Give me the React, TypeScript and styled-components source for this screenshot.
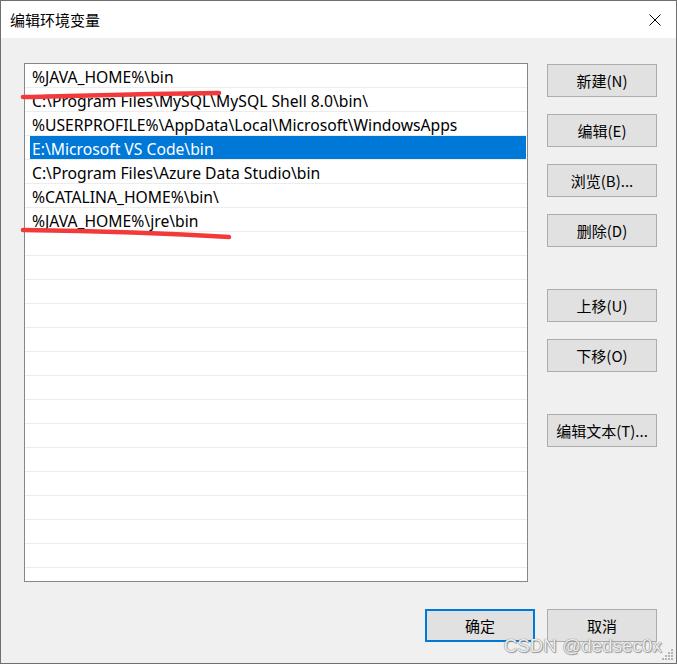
import React from "react";
import styled, { createGlobalStyle } from "styled-components";

const Global = createGlobalStyle`
  html, body { margin: 0; padding: 0; background: #ffffff; }
  * { box-sizing: border-box; }
`;

const FONT = `"Noto Sans", "Noto Sans CJK SC", sans-serif`;

const Window = styled.div`
  position: relative;
  width: 677px;
  height: 664px;
  border: 1px solid #6f6f6f;
  background: #f0f0f0;
  display: flex;
  flex-direction: column;
  font-family: ${FONT};
  overflow: hidden;
`;

const TitleBar = styled.div`
  height: 37px;
  background: #ffffff;
  display: flex;
  align-items: center;
  justify-content: space-between;
  padding: 0 15px 0 9px;
  flex-shrink: 0;
`;

const Title = styled.div`
  font-family: "Noto Sans CJK SC", sans-serif;
  font-size: 15px;
  color: #000;
`;

const CloseBtn = styled.div`
  width: 12px;
  height: 12px;
  display: flex;
`;

const Body = styled.div`
  display: grid;
  grid-template-columns: 504px 110px;
  column-gap: 19px;
  padding: 25px 0 0 23px;
`;

const ListBox = styled.div`
  position: relative;
  width: 504px;
  height: 519px;
  border: 1px solid #828790;
  background: #ffffff;
  overflow: hidden;
`;

const Row = styled.div<{ $selected?: boolean }>`
  height: 24px;
  border-bottom: 1px solid #ececec;
  padding: 0 1px 0 5px;
  background: ${(p) => (p.$selected ? "#0078d7" : "transparent")};
  background-clip: content-box;
  display: flex;
  align-items: center;
  color: ${(p) => (p.$selected ? "#ffffff" : "#000000")};
  font-size: 15.7px;
  white-space: nowrap;
`;

const RowText = styled.span`
  padding-left: 2px;
  padding-top: 2px;
`;

const ButtonColumn = styled.div`
  display: flex;
  flex-direction: column;
  padding-top: 1px;
`;

const Button = styled.div<{ $gap?: number; $default?: boolean }>`
  width: 110px;
  height: 33px;
  margin-top: ${(p) => p.$gap ?? 0}px;
  background: #e1e1e1;
  border: ${(p) => (p.$default ? "2px solid #0078d7" : "1px solid #adadad")};
  display: flex;
  align-items: center;
  justify-content: center;
  font-family: "Noto Sans CJK SC", "Noto Sans", sans-serif;
  font-size: 15px;
  color: #000;
`;

const Footer = styled.div`
  display: flex;
  justify-content: flex-end;
  gap: 12px;
  padding: 27px 19px 0 0;
`;

const Annotations = styled.svg`
  position: absolute;
  left: 0;
  top: 0;
  pointer-events: none;
`;

const Watermark = styled.div`
  position: absolute;
  right: 14px;
  bottom: 6px;
  font-family: "Liberation Sans", "Noto Sans", sans-serif;
  font-size: 18.5px;
  color: rgba(255, 255, 255, 0.85);
  text-shadow: 0 0 1px #8a8a8a, 0 0 1px #8a8a8a, 1px 1px 1px #9a9a9a;
  letter-spacing: 0.2px;
`;

const Grip = styled.svg`
  position: absolute;
  right: 2px;
  bottom: 2px;
`;

const items = [
  "%JAVA_HOME%\\bin",
  "C:\\Program Files\\MySQL\\MySQL Shell 8.0\\bin\\",
  "%USERPROFILE%\\AppData\\Local\\Microsoft\\WindowsApps",
  "E:\\Microsoft VS Code\\bin",
  "C:\\Program Files\\Azure Data Studio\\bin",
  "%CATALINA_HOME%\\bin\\",
  "%JAVA_HOME%\\jre\\bin",
];

const sideButtons: { label: string; gap: number }[] = [
  { label: "新建(N)", gap: 0 },
  { label: "编辑(E)", gap: 17 },
  { label: "浏览(B)...", gap: 17 },
  { label: "删除(D)", gap: 17 },
  { label: "上移(U)", gap: 42 },
  { label: "下移(O)", gap: 17 },
  { label: "编辑文本(T)...", gap: 42 },
];

export default function App() {
  const rows = Array.from({ length: 22 }, (_, i) => items[i] ?? "");
  return (
    <>
      <Global />
      <Window>
        <TitleBar>
          <Title>编辑环境变量</Title>
          <CloseBtn>
            <svg width="12" height="12" viewBox="0 0 12 12">
              <path d="M0.5 0.5 L11.5 11.5 M11.5 0.5 L0.5 11.5" stroke="#000" strokeWidth="1" />
            </svg>
          </CloseBtn>
        </TitleBar>
        <Body>
          <ListBox>
            {rows.map((t, i) => (
              <Row key={i} $selected={i === 3}>
                <RowText>{t}</RowText>
              </Row>
            ))}
          </ListBox>
          <ButtonColumn>
            {sideButtons.map((b) => (
              <Button key={b.label} $gap={b.gap}>
                {b.label}
              </Button>
            ))}
          </ButtonColumn>
        </Body>
        <Footer>
          <Button $default>确定</Button>
          <Button>取消</Button>
        </Footer>
        <Annotations width="677" height="664" viewBox="0 0 677 664">
          <path
            d="M22 96 C 70 95, 130 93, 218 92"
            stroke="#f23a3a"
            strokeWidth="4.5"
            strokeLinecap="round"
            fill="none"
          />
          <path
            d="M22 229 C 90 230, 160 232, 228 236"
            stroke="#f23a3a"
            strokeWidth="4.5"
            strokeLinecap="round"
            fill="none"
          />
        </Annotations>
        <Watermark>CSDN @dedsec0x</Watermark>
        <Grip width="12" height="12" viewBox="0 0 12 12">
          {[
            [9, 0],
            [6, 3],
            [9, 3],
            [3, 6],
            [6, 6],
            [9, 6],
            [0, 9],
            [3, 9],
            [6, 9],
            [9, 9],
          ].map(([x, y]) => (
            <rect key={`${x}-${y}`} x={x} y={y} width="2" height="2" fill="#b4b4b4" />
          ))}
        </Grip>
      </Window>
    </>
  );
}
